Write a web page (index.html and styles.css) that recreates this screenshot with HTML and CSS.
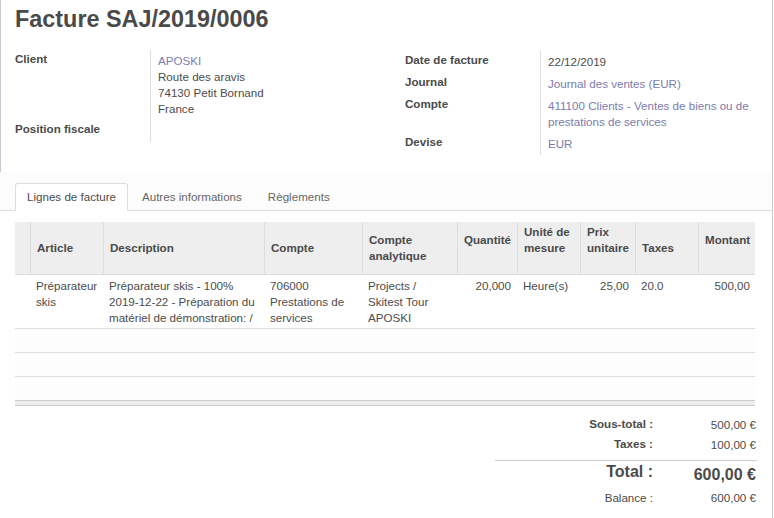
FILE: index.html
```html
<!DOCTYPE html>
<html lang="fr">
<head>
<meta charset="utf-8">
<title>Facture SAJ/2019/0006</title>
<link rel="stylesheet" href="styles.css">
</head>
<body>
<div class="page">
  <div class="sheet">
    <h1 class="title">Facture SAJ/2019/0006</h1>
    <div class="groups">
      <div class="group group-left">
        <div class="lbl">Client</div>
        <div class="val"><a class="link">APOSKI</a><br>Route des aravis<br>74130 Petit Bornand<br>France</div>
        <div class="lbl">Position fiscale</div>
        <div class="val val-last"></div>
      </div>
      <div class="group group-right">
        <div class="lbl">Date de facture</div>
        <div class="val">22/12/2019</div>
        <div class="lbl">Journal</div>
        <div class="val"><a class="link">Journal des ventes (EUR)</a></div>
        <div class="lbl">Compte</div>
        <div class="val"><a class="link">411100 Clients - Ventes de biens ou de prestations de services</a></div>
        <div class="lbl">Devise</div>
        <div class="val"><a class="link">EUR</a></div>
      </div>
    </div>
  </div>

  <div class="notebook">
    <ul class="tabs">
      <li class="tab active">Lignes de facture</li>
      <li class="tab">Autres informations</li>
      <li class="tab">Règlements</li>
    </ul>
  </div>

  <div class="tab-content">
    <table class="lines">
      <colgroup>
        <col class="w-handle"><col class="w-article"><col class="w-desc"><col class="w-compte"><col class="w-analytic"><col class="w-qty"><col class="w-uom"><col class="w-price"><col class="w-tax"><col class="w-amount">
      </colgroup>
      <thead>
        <tr>
          <th></th>
          <th>Article</th>
          <th>Description</th>
          <th>Compte</th>
          <th>Compte analytique</th>
          <th class="raise num">Quantité</th>
          <th class="raise">Unité de mesure</th>
          <th class="raise">Prix unitaire</th>
          <th>Taxes</th>
          <th class="raise num last">Montant</th>
        </tr>
      </thead>
      <tbody>
        <tr class="data">
          <td></td>
          <td>Préparateur skis</td>
          <td>Préparateur skis - 100% 2019-12-22 - Préparation du matériel de démonstration: /</td>
          <td>706000 Prestations de services</td>
          <td>Projects / Skitest Tour APOSKI</td>
          <td class="num">20,000</td>
          <td>Heure(s)</td>
          <td class="num">25,00</td>
          <td>20.0</td>
          <td class="num last">500,00</td>
        </tr>
        <tr class="empty"><td colspan="10"></td></tr>
        <tr class="empty"><td colspan="10"></td></tr>
        <tr class="empty empty-last"><td colspan="10"></td></tr>
      </tbody>
      <tfoot>
        <tr><td colspan="10"></td></tr>
      </tfoot>
    </table>

    <div class="totals">
      <div class="t-lbl">Sous-total :</div>
      <div class="t-val">500,00 €</div>
      <div class="t-lbl">Taxes :</div>
      <div class="t-val">100,00 €</div>
      <div class="t-sep"></div>
      <div class="t-lbl t-big">Total :</div>
      <div class="t-val t-big t-big-val">600,00 €</div>
      <div class="t-lbl t-plain t-bal">Balance :</div>
      <div class="t-val t-bal">600,00 €</div>
    </div>
  </div>
</div>
</body>
</html>
```

FILE: styles.css
```css
* { box-sizing: border-box; }

html, body {
  margin: 0;
  padding: 0;
  background: #fff;
}

body {
  font-family: "Liberation Sans", Arial, sans-serif;
  font-size: 11.6px;
  line-height: 16px;
  color: #4c4c4c;
}

.page {
  width: 773px;
  min-height: 518px;
  border-right: 1px solid #cbcbd6;
}

/* ---------- sheet header ---------- */
.sheet {
  height: 172px;
  border-left: 1px solid #c9c9d6;
  padding: 5px 15px 0 14px;
}

.title {
  margin: 0;
  font-size: 23.4px;
  line-height: 28px;
  font-weight: bold;
  color: #4a4a4a;
}

.groups {
  display: flex;
  gap: 15px;
  margin-top: 17px;
}

.group {
  display: grid;
  grid-template-columns: 135px 1fr;
  align-content: start;
}

.group-left { width: 375px; }

.group-right {
  flex: 1;
  margin-top: 1px;
}

.lbl {
  font-weight: bold;
  padding: 1px 0 5px;
  color: #4a4a4a;
}

.val {
  border-left: 1px solid #ddd;
  padding: 3px 0 3px 7px;
  color: #4c4c4c;
}

.val-last { padding-bottom: 0; }

.link {
  color: #7c7bad;
  text-decoration: none;
}

/* ---------- notebook ---------- */
.notebook {
  background: #fcfcfc;
  padding-top: 11px;
}

.tabs {
  list-style: none;
  margin: 0;
  padding: 0 0 0 15px;
  display: flex;
  border-bottom: 1px solid #ddd;
}

.tab {
  margin: 0 2px -1px 0;
  padding: 5px 11px;
  border: 1px solid transparent;
  border-radius: 3px 3px 0 0;
  color: #666;
}

.tab.active {
  background: #fff;
  border-color: #ddd #ddd #fff;
  color: #4c4c4c;
}

.tab-content {
  background: #fff;
  padding: 11px 0 0 15px;
}

/* ---------- lines table ---------- */
.lines {
  width: 740px;
  table-layout: fixed;
  border-collapse: separate;
  border-spacing: 0;
}

.lines th,
.lines td {
  box-sizing: content-box;
}

.w-handle { width: 15px; }
.w-article { width: 73px; }
.w-desc { width: 161px; }
.w-compte { width: 98px; }
.w-analytic { width: 95px; }
.w-qty { width: 60px; }
.w-uom { width: 63px; }
.w-price { width: 55px; }
.w-tax { width: 63px; }
.w-amount { width: 57px; }

.lines th {
  background: #eee;
  font-weight: bold;
  text-align: left;
  vertical-align: middle;
  padding: 2px 6px;
  height: 48px;
  border-bottom: 1px solid #ddd;
  color: #4a4a4a;
}

.lines th + th { border-left: 1px solid #ddd; }

.lines th.raise {
  padding-bottom: 18px;
  height: 32px;
}

.lines .num { text-align: right; }

.lines .last { padding-right: 5px; }

.lines tr.data td {
  vertical-align: top;
  padding: 3px 6px 2px;
  border-bottom: 1px solid #ddd;
}

.lines tr.data td.last { padding-right: 5px; }

.lines tr.empty td {
  height: 23px;
  padding: 0;
  border-bottom: 1px solid #ddd;
  background: #fdfdfd;
}

.lines tr.empty-last td { border-bottom: 0; }

.lines tfoot td {
  height: 4px;
  padding: 0;
  background: #eee;
  border-top: 1px solid #ccc;
  border-bottom: 1px solid #ccc;
}

/* ---------- totals ---------- */
.totals {
  width: 262px;
  margin: 8px 15px 0 auto;
  display: grid;
  grid-template-columns: 158px 104px;
}

.t-lbl {
  text-align: right;
  font-weight: bold;
  padding: 2px 0;
  color: #4a4a4a;
}

.t-val {
  text-align: right;
  padding: 3px 1px 1px 0;
  color: #4c4c4c;
}

.t-sep {
  grid-column: 1 / -1;
  margin-top: 6px;
  border-top: 1px solid #ccc;
}

.t-big {
  font-size: 16px;
  line-height: 20px;
  font-weight: bold;
  padding-top: 1px;
}

.t-big-val { padding-top: 4px; }

.t-plain { font-weight: normal; }

.t-bal { padding-top: 4px; }
```
